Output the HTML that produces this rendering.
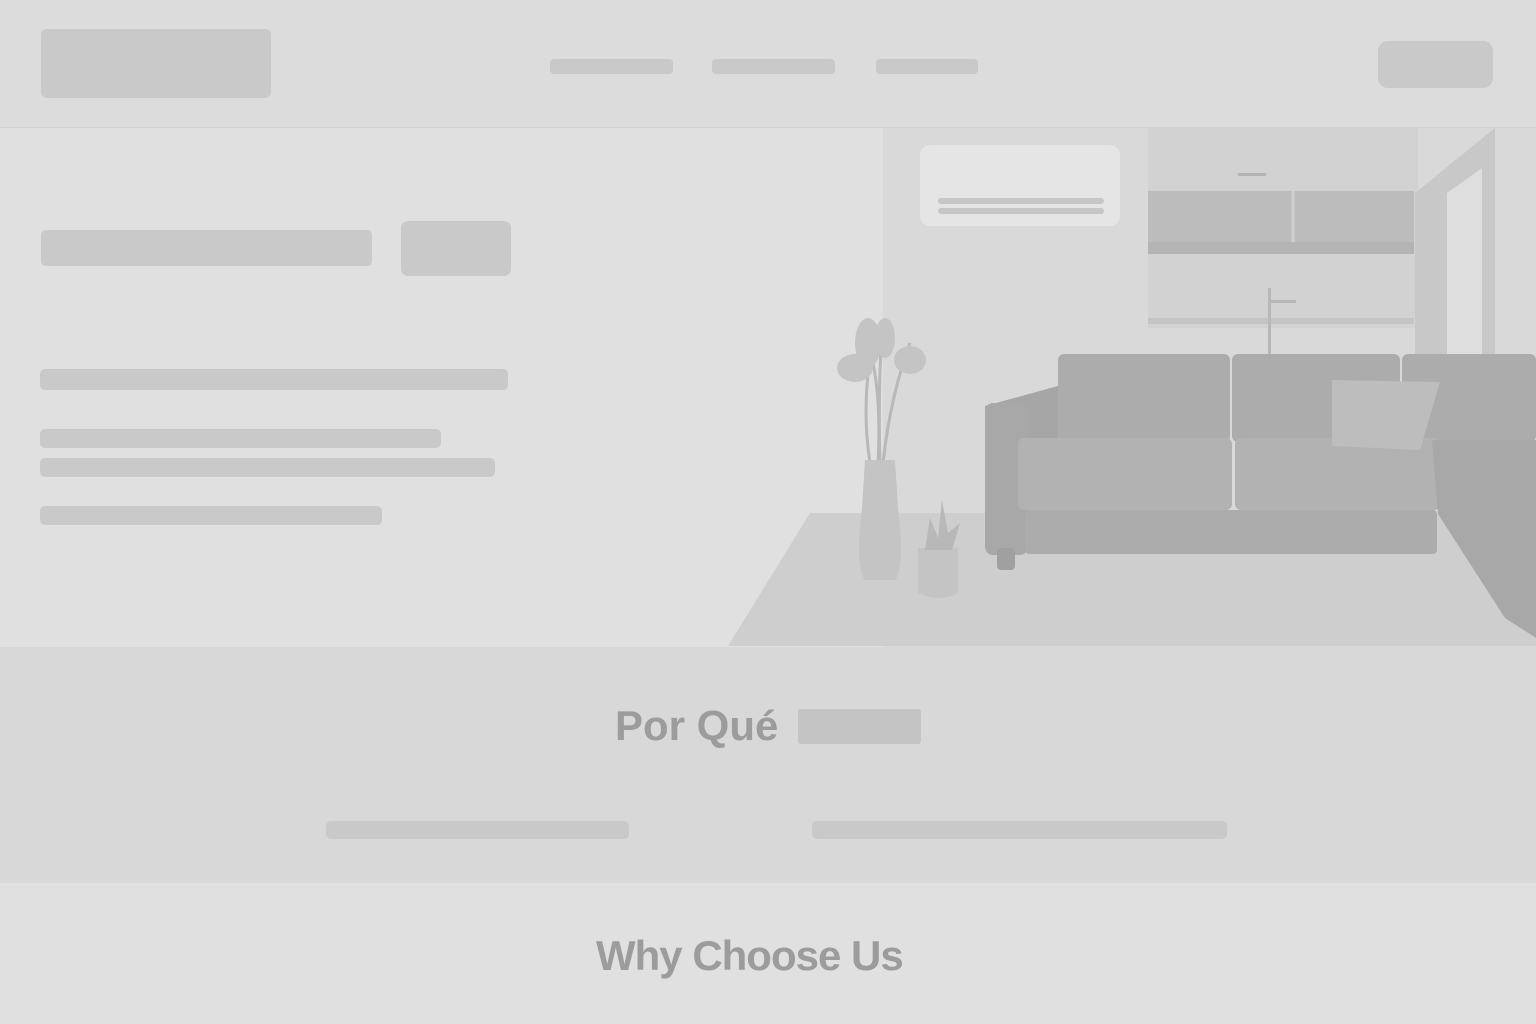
<!DOCTYPE html>
<html><head><meta charset="utf-8"><style>
*{margin:0;padding:0;box-sizing:border-box}
body{width:1536px;height:1024px;overflow:hidden;background:#e0e0e0;font-family:"Liberation Sans",sans-serif;position:relative}
.a{position:absolute}
.bar{position:absolute;background:#c9c9c9;border-radius:5px}
</style></head><body>
<div class="a" style="left:0;top:0;width:1536px;height:128px;background:#dcdcdc;border-bottom:1px solid #d2d2d2"></div>
<div class="bar" style="left:41px;top:29px;width:230px;height:69px;border-radius:6px"></div>
<div class="bar" style="left:550px;top:59px;width:123px;height:15px;border-radius:4px"></div>
<div class="bar" style="left:712px;top:59px;width:123px;height:15px;border-radius:4px"></div>
<div class="bar" style="left:876px;top:59px;width:102px;height:15px;border-radius:4px"></div>
<div class="bar" style="left:1378px;top:41px;width:115px;height:47px;border-radius:10px"></div>

<div class="a" style="left:0;top:129px;width:1536px;height:518px;background:#e0e0e0"></div>
<div class="bar" style="left:41px;top:230px;width:331px;height:36px"></div>
<div class="bar" style="left:401px;top:221px;width:110px;height:55px;border-radius:7px"></div>
<div class="bar" style="left:40px;top:369px;width:468px;height:21px"></div>
<div class="bar" style="left:40px;top:429px;width:401px;height:19px"></div>
<div class="bar" style="left:40px;top:458px;width:455px;height:19px"></div>
<div class="bar" style="left:40px;top:506px;width:342px;height:19px"></div>

<svg class="a" style="left:720px;top:128px" width="816" height="520" viewBox="0 0 816 520">
<rect x="163" y="0" width="653" height="520" fill="#d9d9d9"/>
<rect x="200" y="17" width="200" height="81" rx="10" fill="#e5e5e5"/>
<rect x="218" y="70" width="166" height="6" rx="3" fill="#c6c6c6"/>
<rect x="218" y="80" width="166" height="6" rx="3" fill="#c6c6c6"/>
<rect x="428" y="0" width="270" height="200" fill="#d2d2d2"/>
<rect x="428" y="63" width="266" height="63" fill="#bcbcbc"/>
<line x1="573" y1="63" x2="573" y2="115" stroke="#d0d0d0" stroke-width="3"/>
<rect x="428" y="114" width="266" height="12" fill="#b4b4b4"/>
<rect x="428" y="190" width="266" height="6" fill="#c4c4c4"/>
<rect x="518" y="45" width="28" height="3" fill="#b4b4b4"/>
<rect x="548" y="160" width="3" height="70" fill="#b8b8b8"/>
<rect x="548" y="172" width="28" height="3" fill="#b8b8b8"/>
<polygon points="695,65 775,0 775,230 695,230" fill="#c8c8c8"/>
<polygon points="727,65 762,40 762,230 727,230" fill="#dedede"/>
<polygon points="8,518 90,385 816,385 816,518" fill="#cecece"/>
<path d="M150,335 Q140,270 155,205 M158,335 Q162,260 148,215 M163,335 Q170,270 190,215 M160,335 Q158,260 162,205" stroke="#b8b8b8" stroke-width="3" fill="none"/>
<ellipse cx="148" cy="215" rx="13" ry="25" fill="#c4c4c4"/>
<ellipse cx="135" cy="240" rx="18" ry="14" fill="#c4c4c4"/>
<ellipse cx="165" cy="210" rx="10" ry="20" fill="#c4c4c4"/>
<ellipse cx="190" cy="232" rx="16" ry="14" fill="#c4c4c4"/>
<path d="M145,332 L175,332 L178,380 Q185,440 175,452 L145,452 Q135,440 142,380 Z" fill="#c4c4c4"/>
<path d="M198,420 L238,420 L238,465 Q220,475 198,465 Z" fill="#c4c4c4"/>
<path d="M205,422 L210,390 L218,410 L222,372 L228,405 L240,395 L232,422 Z" fill="#b8b8b8"/>
<rect x="338" y="226" width="172" height="88" rx="6" fill="#acacac"/>
<rect x="512" y="226" width="168" height="88" rx="6" fill="#acacac"/>
<rect x="682" y="226" width="134" height="88" rx="6" fill="#acacac"/>
<path d="M265,278 L338,258 L338,420 L265,420 Z" fill="#a6a6a6" />
<rect x="265" y="275" width="43" height="152" rx="8" fill="#a8a8a8"/>
<rect x="298" y="310" width="214" height="72" rx="6" fill="#b2b2b2"/>
<rect x="515" y="310" width="205" height="72" rx="6" fill="#b2b2b2"/>
<rect x="305" y="382" width="412" height="44" rx="4" fill="#acacac"/>
<rect x="277" y="420" width="18" height="22" rx="4" fill="#a0a0a0"/>
<polygon points="612,252 720,254 700,322 612,318" fill="#bdbdbd"/>
<path d="M712,312 L816,312 L816,510 L785,490 L718,386 Z" fill="#a8a8a8"/>
</svg>

<div class="a" style="left:0;top:647px;width:1536px;height:236px;background:#d8d8d8"></div>
<div class="a" style="left:615px;top:702px;font-size:42px;font-weight:bold;color:#9c9c9c;letter-spacing:0px">Por Qué</div>
<div class="bar" style="left:798px;top:709px;width:123px;height:35px;border-radius:3px;background:#c4c4c4"></div>
<div class="bar" style="left:326px;top:821px;width:303px;height:18px"></div>
<div class="bar" style="left:812px;top:821px;width:415px;height:18px"></div>
<div class="a" style="left:0;top:883px;width:1536px;height:141px;background:#e0e0e0"></div>
<div class="a" style="left:596px;top:932px;font-size:42px;font-weight:bold;color:#9c9c9c;letter-spacing:-1px">Why Choose Us</div>
</body></html>
